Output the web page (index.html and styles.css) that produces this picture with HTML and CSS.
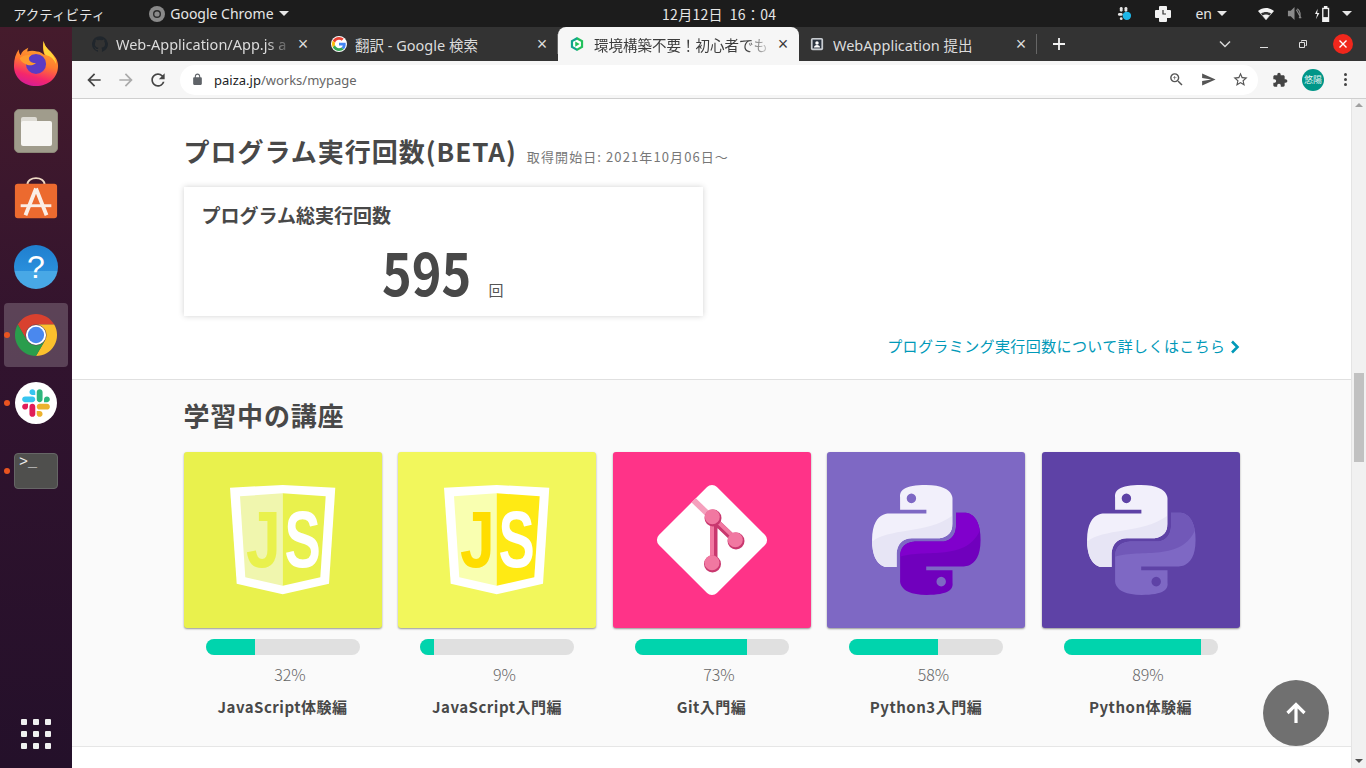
FILE: index.html
```html
<!DOCTYPE html>
<html lang="ja">
<head>
    <meta charset="UTF-8">
    <title>paiza - mypage</title>
    <link rel="stylesheet" href="styles.css">
</head>
<body>

    <!-- GNOME top bar -->
    <header class="topbar">
        <div class="topbar-left">
            <span class="activities">アクティビティ</span>
            <span class="app-menu">
                <svg class="app-icon" viewBox="0 0 16 16"><circle cx="8" cy="8" r="8" fill="#8a8a8a"/><circle cx="8" cy="8" r="4" fill="#2a2a2a"/><circle cx="8" cy="8" r="2.6" fill="#8a8a8a"/></svg>
                Google Chrome
                <i class="caret"></i>
            </span>
        </div>
        <div class="clock">12月12日&nbsp;&nbsp;16：04</div>
        <div class="tray">
            <svg class="tray-slack" viewBox="0 0 16 16"><circle cx="10.500" cy="10.500" r="4.500" fill="#1fb6e8"/><rect x="3" y="1" width="3" height="5" rx="1.500" fill="#e6e6e6"/><rect x="8" y="1" width="3" height="5" rx="1.500" fill="#e6e6e6"/><rect x="1" y="7.500" width="5" height="3" rx="1.500" fill="#e6e6e6"/><rect x="3" y="12" width="3" height="3" rx="1.500" fill="#e6e6e6"/></svg>
            <svg class="tray-cross" viewBox="0 0 16 16"><path d="M5 0h6a1 1 0 0 1 1 1v3h3a1 1 0 0 1 1 1v6a1 1 0 0 1-1 1h-3v3a1 1 0 0 1-1 1H5a1 1 0 0 1-1-1v-3H1a1 1 0 0 1-1-1V5a1 1 0 0 1 1-1h3V1a1 1 0 0 1 1-1z" fill="#f2f2f2"/><path d="M8 4v4h3" stroke="#333" stroke-width="1.200" fill="none"/></svg>
            <span class="tray-lang">en <i class="caret"></i></span>
            <svg class="tray-wifi" viewBox="0 0 16 14"><path d="M8 13L0 4c4.500-4 11.500-4 16 0z" fill="#f2f2f2"/><path d="M8 13L3 6.500c3-2 7-2 10 0z" fill="#333"/><path d="M8 13L4.500 8.500c2-1.300 5-1.300 7 0z" fill="#f2f2f2"/></svg>
            <svg class="tray-sound" viewBox="0 0 16 16"><path d="M1 5h3l4-4v14l-4-4H1z" fill="#8a8a8a"/><path d="M10 4l5 9M11 3c3 2 4 7 2 10" stroke="#8a8a8a" stroke-width="1.300" fill="none"/></svg>
            <svg class="tray-battery" viewBox="0 0 20 18"><path d="M4 3L1 9h2.500L2 15l4-7H3.500z" fill="#f2f2f2"/><path d="M11 0h4v2h2v16H9V2h2z" fill="#f2f2f2"/><rect x="10.500" y="3.500" width="5" height="9" fill="#222"/></svg>
            <i class="caret caret-last"></i>
        </div>
    </header>

    <div class="desktop">
        <!-- Ubuntu dock -->
        <nav class="dock">
            <div class="dock-item">
                <svg class="dock-icon" viewBox="0 0 48 48">
                    <defs>
                        <linearGradient id="foxBody" x1="0.700" y1="0" x2="0.400" y2="1"><stop offset="0" stop-color="#ffb52e"/><stop offset="0.500" stop-color="#ff7a2f"/><stop offset="0.800" stop-color="#f5276b"/><stop offset="1" stop-color="#d71d94"/></linearGradient>
                    </defs>
                    <path d="M32 1c1 5 3 7 7 11 5 5 8 9 8 15 0 12-10 21-23 21S1 39 1 27c0-7 2-13 5-17 0 3 1 5 2 6 1-4 4-6 8-8-1 2-1 3-1 4 3-1 7-1 10 0 3 0 6 2 8 4-2-5-2-11-1-15z" fill="url(#foxBody)"/>
                    <circle cx="24" cy="25" r="10.500" fill="#5b3bc4"/>
                    <path d="M7 19c3-3 8-4 12-3-2 1-3 3-2 5 1 2 4 3 7 3-3 3-8 3-11 1-3-1-5-3-6-6z" fill="#ff9a2e"/>
                    <path d="M32 1c1 5 3 7 7 11 4 5 6 9 6 13-2-5-6-8-10-9-3-1-4-9-3-15z" fill="#ffd43a"/>
                </svg>
            </div>
            <div class="dock-item">
                <div class="files-tile"><div class="files-tab"></div><div class="files-folder"></div></div>
            </div>
            <div class="dock-item">
                <svg class="dock-icon" viewBox="0 0 48 48">
                    <path d="M15 9c0-9 18-9 18 0" fill="none" stroke="#eed9c4" stroke-width="2"/>
                    <rect x="2" y="8" width="44" height="36" rx="3" fill="#ec6a2f"/>
                    <path d="M24 13L13 41M24 13l11 28" stroke="#fbeee6" stroke-width="4" fill="none"/>
                    <path d="M8 31h32" stroke="#fbeee6" stroke-width="3"/>
                </svg>
            </div>
            <div class="dock-item">
                <div class="help-icon">?</div>
            </div>
            <div class="dock-item dock-item-active">
                <i class="run-dot"></i>
                <svg class="dock-icon" viewBox="0 0 48 48">
                    <path d="M5 13A22 22 0 0 1 43 13H24A11 11 0 0 0 14.500 29.500Z" fill="#d9412f"/>
                    <path d="M43 13A22 22 0 0 1 24 46L33.500 29.500A11 11 0 0 0 24 13Z" fill="#fbc02d"/>
                    <path d="M24 46A22 22 0 0 1 5 13L14.500 29.500A11 11 0 0 0 33.500 29.500Z" fill="#2a9d4c"/>
                    <circle cx="24" cy="24" r="10.500" fill="#fff"/>
                    <circle cx="24" cy="24" r="8.500" fill="#4a88ee"/>
                </svg>
            </div>
            <div class="dock-item">
                <i class="run-dot"></i>
                <div class="slack-tile">
                    <svg class="slack-mark" viewBox="0 0 127 127">
                        <path d="M27.200 80c0 7.300-5.900 13.200-13.200 13.200C6.700 93.200.8 87.300.8 80c0-7.300 5.900-13.200 13.200-13.200h13.200V80zm6.600 0c0-7.300 5.900-13.200 13.200-13.200 7.300 0 13.200 5.900 13.200 13.200v33c0 7.300-5.900 13.200-13.200 13.200-7.300 0-13.200-5.900-13.200-13.200V80z" fill="#E01E5A"/>
                        <path d="M47 27c-7.300 0-13.200-5.900-13.200-13.200C33.800 6.500 39.700.6 47 .6c7.300 0 13.200 5.900 13.200 13.200V27H47zm0 6.700c7.300 0 13.200 5.900 13.200 13.200 0 7.300-5.900 13.200-13.200 13.200H13.900C6.600 60.100.7 54.200.7 46.900c0-7.300 5.900-13.200 13.200-13.200H47z" fill="#36C5F0"/>
                        <path d="M99.900 46.900c0-7.300 5.900-13.200 13.200-13.200 7.300 0 13.200 5.900 13.200 13.200 0 7.300-5.900 13.200-13.200 13.200H99.900V46.900zm-6.600 0c0 7.300-5.900 13.200-13.200 13.200-7.300 0-13.200-5.900-13.200-13.200V13.800C66.900 6.500 72.800.6 80.100.6c7.300 0 13.200 5.900 13.200 13.200v33.100z" fill="#2EB67D"/>
                        <path d="M80.100 99.800c7.300 0 13.200 5.900 13.200 13.200 0 7.300-5.900 13.200-13.200 13.200-7.300 0-13.200-5.900-13.200-13.200V99.800h13.200zm0-6.600c-7.300 0-13.200-5.900-13.200-13.200 0-7.300 5.900-13.200 13.200-13.200h33.100c7.300 0 13.200 5.900 13.200 13.200 0 7.300-5.900 13.200-13.200 13.200H80.100z" fill="#ECB22E"/>
                    </svg>
                </div>
            </div>
            <div class="dock-item">
                <i class="run-dot"></i>
                <div class="terminal-tile">&gt;_</div>
            </div>
            <div class="app-grid">
                <i></i><i></i><i></i><i></i><i></i><i></i><i></i><i></i><i></i>
            </div>
        </nav>

        <div class="browser">
            <!-- Tab strip -->
            <div class="tabstrip">
                <div class="tab">
                    <svg class="favicon" viewBox="0 0 24 24"><path fill="#20262c" d="M12 .3a12 12 0 0 0-3.800 23.380c.6.120.830-.260.830-.570L9 21.070c-3.340.720-4.040-1.610-4.040-1.610-.550-1.390-1.340-1.760-1.340-1.760-1.080-.740.090-.730.090-.730 1.200.090 1.840 1.240 1.840 1.240 1.070 1.830 2.810 1.300 3.500 1 .1-.780.420-1.310.760-1.610-2.670-.3-5.470-1.330-5.470-5.930 0-1.310.470-2.380 1.240-3.220-.140-.3-.540-1.520.1-3.180 0 0 1-.320 3.300 1.230a11.500 11.500 0 0 1 6 0c2.280-1.550 3.290-1.230 3.290-1.230.640 1.660.240 2.880.120 3.180a4.650 4.650 0 0 1 1.230 3.220c0 4.610-2.800 5.630-5.480 5.920.420.360.810 1.100.810 2.220l-.010 3.290c0 .310.2.690.820.57A12 12 0 0 0 12 .3"/></svg>
                    <span class="tab-title tab-title-fade">Web-Application/App.js a</span>
                    <span class="tab-close">×</span>
                </div>
                <div class="tab tab-split">
                    <span class="favicon-round">
                        <svg viewBox="0 0 48 48">
                            <path fill="#EA4335" d="M24 9.500c3.540 0 6.710 1.220 9.210 3.600l6.850-6.850C35.900 2.380 30.470 0 24 0 14.620 0 6.510 5.380 2.560 13.220l7.980 6.190C12.430 13.720 17.740 9.500 24 9.500z"/>
                            <path fill="#4285F4" d="M46.980 24.550c0-1.570-.150-3.090-.380-4.550H24v9.020h12.940c-.580 2.960-2.260 5.480-4.780 7.180l7.730 6c4.510-4.180 7.090-10.360 7.090-17.650z"/>
                            <path fill="#FBBC05" d="M10.530 28.590c-.480-1.450-.760-2.990-.760-4.590s.270-3.140.760-4.590l-7.980-6.190C.920 16.460 0 20.120 0 24c0 3.880.920 7.540 2.560 10.780l7.970-6.190z"/>
                            <path fill="#34A853" d="M24 48c6.480 0 11.930-2.130 16.030-5.810l-7.730-6c-2.150 1.450-4.920 2.300-8.300 2.300-6.260 0-11.570-4.220-13.470-9.910l-7.980 6.190C6.510 42.620 14.620 48 24 48z"/>
                        </svg>
                    </span>
                    <span class="tab-title">翻訳 - Google 検索</span>
                    <span class="tab-close">×</span>
                </div>
                <div class="tab tab-active">
                    <svg class="favicon favicon-small" viewBox="0 0 16 16"><path d="M8 0l7 4v8l-7 4z" fill="#22c05c"/><path d="M8 0L1 4v8l7 4z" fill="#10a58c"/><path d="M8 3l4.500 2.500v5L8 13l-4.500-2.500v-5z" fill="#fff"/><path d="M6 5v6l5-3z" fill="#22c05c"/></svg>
                    <span class="tab-title tab-title-fade">環境構築不要！初心者でも</span>
                    <span class="tab-close">×</span>
                </div>
                <div class="tab tab-last">
                    <svg class="favicon favicon-small" viewBox="0 0 16 16"><rect x="1" y="1" width="14" height="14" rx="2" fill="#c8ccd0"/><rect x="3" y="3" width="10" height="10" fill="#2b3440"/><circle cx="8" cy="6.800" r="2" fill="#fff"/><path d="M4.500 12c0-2 1.500-3 3.500-3s3.500 1 3.500 3z" fill="#fff"/></svg>
                    <span class="tab-title">WebApplication 提出</span>
                    <span class="tab-close">×</span>
                </div>
                <svg class="new-tab" viewBox="0 0 12 12"><path d="M6 0v12M0 6h12" stroke="#f2f2f2" stroke-width="1.800"/></svg>
                <div class="window-controls">
                    <svg class="win-chevron" viewBox="0 0 12 8"><path d="M1 1.500l5 5 5-5" fill="none" stroke="#d8d8d8" stroke-width="1.500"/></svg>
                    <span class="win-min"></span>
                    <svg class="win-restore" viewBox="0 0 8 8"><path d="M2.500 1.500V.5h5v5h-1M.5 2.500h5v5h-5z" fill="none" stroke="#e0e0e0"/></svg>
                    <span class="win-close"><svg viewBox="0 0 10 10"><path d="M1.500 1.500l7 7M8.500 1.500l-7 7" stroke="#fff" stroke-width="1.400"/></svg></span>
                </div>
            </div>

            <!-- Address bar -->
            <div class="toolbar">
                <svg class="tool-icon" viewBox="0 0 24 24"><path d="M20 11H7.830l5.590-5.590L12 4l-8 8 8 8 1.410-1.410L7.830 13H20v-2z" fill="#444"/></svg>
                <svg class="tool-icon" viewBox="0 0 24 24"><path d="M12 4l-1.410 1.410L16.170 11H4v2h12.170l-5.580 5.590L12 20l8-8z" fill="#aaa"/></svg>
                <svg class="tool-icon" viewBox="0 0 24 24"><path d="M17.650 6.350A7.958 7.958 0 0 0 12 4c-4.420 0-7.990 3.580-7.990 8s3.570 8 7.990 8c3.730 0 6.840-2.550 7.730-6h-2.080A5.990 5.990 0 0 1 12 18c-3.310 0-6-2.690-6-6s2.690-6 6-6c1.660 0 3.140.690 4.220 1.780L13 11h7V4l-2.350 2.350z" fill="#444"/></svg>
                <div class="omnibox">
                    <svg class="lock" viewBox="0 0 24 24"><path d="M18 8h-1V6c0-2.760-2.240-5-5-5S7 3.240 7 6v2H6c-1.100 0-2 .9-2 2v10c0 1.100.9 2 2 2h12c1.100 0 2-.9 2-2V10c0-1.100-.9-2-2-2zM9 6c0-1.660 1.340-3 3-3s3 1.340 3 3v2H9V6z" fill="#5f6368"/></svg>
                    <span class="url"><b>paiza.jp</b>/works/mypage</span>
                    <div class="omni-actions">
                        <svg class="omni-icon" viewBox="0 0 24 24"><path d="M15.500 14h-.790l-.280-.270A6.470 6.470 0 0 0 16 9.500 6.500 6.500 0 1 0 9.500 16c1.610 0 3.090-.590 4.230-1.570l.270.280v.790l5 4.990L20.490 19l-4.990-5zm-6 0C7.010 14 5 11.990 5 9.500S7.010 5 9.500 5 14 7.010 14 9.500 11.990 14 9.500 14zM12 10h-2v2H9v-2H7V9h2V7h1v2h2v1z" fill="#555"/></svg>
                        <svg class="omni-icon" viewBox="0 0 24 24"><path d="M3 20.500L22 12 3 3.500V10l13 2-13 2z" fill="#555"/></svg>
                        <svg class="omni-icon" viewBox="0 0 24 24"><path d="M22 9.240l-7.190-.620L12 2 9.190 8.630 2 9.240l5.460 4.730L5.820 21 12 17.270 18.180 21l-1.630-7.030L22 9.240zM12 15.400l-3.760 2.270 1-4.280-3.320-2.880 4.380-.380L12 6.100l1.710 4.040 4.380.380-3.320 2.880 1 4.280L12 15.400z" fill="#555"/></svg>
                    </div>
                </div>
                <svg class="ext-icon" viewBox="0 0 24 24"><path d="M20.500 11H19V7c0-1.100-.9-2-2-2h-4V3.500C13 2.120 11.880 1 10.500 1S8 2.120 8 3.500V5H4c-1.100 0-1.990.9-1.990 2v3.800H3.500c1.490 0 2.700 1.210 2.700 2.700s-1.210 2.700-2.700 2.700H2V20c0 1.100.9 2 2 2h3.800v-1.500c0-1.490 1.210-2.700 2.700-2.700 1.490 0 2.700 1.210 2.700 2.700V22H17c1.100 0 2-.9 2-2v-4h1.500c1.380 0 2.500-1.120 2.500-2.500S21.880 11 20.500 11z" fill="#444"/></svg>
                <span class="avatar">悠陽</span>
                <span class="kebab"><i></i><i></i><i></i></span>
            </div>

            <!-- Page area -->
            <div class="viewport">
                <main class="page">
                    <section class="run-section">
                        <div class="container">
                            <div class="run-heading">
                                <h2 class="section-title">プログラム実行回数(BETA)</h2>
                                <span class="since">取得開始日: 2021年10月06日〜</span>
                            </div>
                            <div class="run-card">
                                <h3 class="run-card-title">プログラム総実行回数</h3>
                                <p class="run-count"><span class="run-num">595</span><span class="run-unit">回</span></p>
                            </div>
                            <p class="more-line">
                                <a class="more-link" href="#">プログラミング実行回数について詳しくはこちら<svg class="more-chevron" viewBox="0 0 10 14"><path d="M2 1.500L7.500 7 2 12.500" fill="none" stroke="#0099b8" stroke-width="2.600"/></svg></a>
                            </p>
                        </div>
                    </section>

                    <section class="course-section">
                        <div class="container">
                            <h2 class="section-title course-title">学習中の講座</h2>
                            <div class="course-grid">
                                <article class="course">
                                    <div class="thumb thumb-js1">
                                        <svg class="thumb-art" viewBox="0 0 198 176">
                                            <path d="M46 35.700L98.700 33l52.600 2.700-6.300 96-46.300 10.600-46-10.600z" fill="#fff"/>
                                            <path d="M56 44.300l42.700-3v92.400l-37.400-8.400z" fill="#f0f6ae"/>
                                            <path d="M98.700 41.300l43 3-5.400 81-37.600 8.400z" fill="#e9f14d"/>
                                            <text class="js-letter" transform="translate(62 115) scale(.78 1)" fill="#e9f14d">J</text>
                                            <text class="js-letter" transform="translate(100.500 115) scale(.68 1)" fill="#fff">S</text>
                                        </svg>
                                    </div>
                                    <div class="bar"><div class="bar-fill" style="width:32%"></div></div>
                                    <div class="percent">32%</div>
                                    <h4 class="course-name">JavaScript体験編</h4>
                                </article>

                                <article class="course">
                                    <div class="thumb thumb-js2">
                                        <svg class="thumb-art" viewBox="0 0 198 176">
                                            <path d="M46 35.700L98.700 33l52.600 2.700-6.300 96-46.300 10.600-46-10.600z" fill="#fff"/>
                                            <path d="M56 44.300l42.700-3v92.400l-37.400-8.400z" fill="#f9ffb0"/>
                                            <path d="M98.700 41.300l43 3-5.400 81-37.600 8.400z" fill="#ffea14"/>
                                            <text class="js-letter" transform="translate(62 115) scale(.78 1)" fill="#ffdd00">J</text>
                                            <text class="js-letter" transform="translate(100.500 115) scale(.68 1)" fill="#fff">S</text>
                                        </svg>
                                    </div>
                                    <div class="bar"><div class="bar-fill" style="width:9%"></div></div>
                                    <div class="percent">9%</div>
                                    <h4 class="course-name">JavaScript入門編</h4>
                                </article>

                                <article class="course">
                                    <div class="thumb thumb-git">
                                        <svg class="thumb-art" viewBox="0 0 198 176">
                                            <defs>
                                                <clipPath id="gitDiamond"><rect x="58" y="47" width="82" height="82" rx="7" transform="rotate(45 99 88)"/></clipPath>
                                            </defs>
                                            <rect x="58" y="47" width="82" height="82" rx="7" transform="rotate(45 99 88)" fill="#fff"/>
                                            <path d="M72 40L99 66" stroke="#f5a0bd" stroke-width="6" clip-path="url(#gitDiamond)"/>
                                            <path d="M101 66v45M101 68l22 21" stroke="#c9386f" stroke-width="7" fill="none"/>
                                            <path d="M99 66v45M100 65l22 21" stroke="#f178a1" stroke-width="4" fill="none"/>
                                            <circle cx="100" cy="66" r="8.500" fill="#c9386f"/><circle cx="99.300" cy="64.800" r="7.500" fill="#f178a1"/>
                                            <circle cx="123" cy="89" r="8.500" fill="#c9386f"/><circle cx="122.300" cy="87.800" r="7.500" fill="#f178a1"/>
                                            <circle cx="99.500" cy="112" r="8.500" fill="#c9386f"/><circle cx="99" cy="110.800" r="7.500" fill="#f178a1"/>
                                        </svg>
                                    </div>
                                    <div class="bar"><div class="bar-fill" style="width:73%"></div></div>
                                    <div class="percent">73%</div>
                                    <h4 class="course-name">Git入門編</h4>
                                </article>

                                <article class="course">
                                    <div class="thumb thumb-py3">
                                        <svg class="thumb-art" viewBox="0 0 198 176">
                                            <defs>
                                                <path id="pySnakeTop" transform="translate(45.300 33) scale(4.500 4.580)" d="M14.250.18l.9.2.730.260.590.3.450.320.340.340.250.340.160.330.1.3.040.260.020.2-.010.130V8.500l-.050.630-.130.550-.210.460-.260.380-.3.310-.330.250-.350.190-.350.140-.330.1-.3.070-.260.040-.210.020H8.770l-.690.050-.590.140-.5.220-.410.270-.330.320-.270.350-.2.360-.150.370-.1.350-.070.320-.040.270-.020.210v3.060H3.170l-.210-.030-.280-.070-.320-.120-.350-.180-.360-.260-.360-.360-.350-.460-.320-.590-.280-.730-.210-.880-.140-1.050-.050-1.230.060-1.220.160-1.040.240-.870.320-.710.360-.570.4-.44.420-.33.420-.24.4-.16.360-.1.320-.050.240-.010h.160l.060.010h8.160v-.83H6.180l-.010-2.750-.020-.37.050-.34.110-.31.170-.28.250-.26.310-.23.38-.2.44-.18.51-.15.58-.12.64-.1.71-.06.77-.04.84-.02 1.270.05zm-6.300 1.980l-.230.330-.080.410.080.410.230.340.330.220.410.090.410-.09.330-.22.230-.34.080-.41-.08-.41-.23-.33-.33-.22-.41-.09-.41.09z"/>
                                                <path id="pySnakeBottom" transform="translate(45.300 33) scale(4.500 4.580)" d="M21.040 6.110l.280.060.320.120.350.180.360.270.360.350.350.470.320.590.280.730.210.880.140 1.040.050 1.230-.060 1.230-.160 1.040-.240.860-.320.710-.360.570-.4.450-.42.330-.42.240-.4.160-.360.090-.32.050-.24.020-.16-.01h-8.220v.820h5.840l.010 2.760.020.360-.05.340-.11.310-.17.290-.25.250-.31.240-.38.2-.44.170-.51.150-.58.130-.64.090-.71.070-.77.040-.84.010-1.270-.04-1.070-.14-.9-.2-.73-.25-.59-.3-.45-.33-.34-.34-.25-.34-.16-.33-.1-.3-.04-.25-.02-.2.010-.13v-5.340l.05-.64.13-.54.21-.46.26-.38.3-.32.33-.24.35-.2.35-.14.33-.1.3-.06.26-.04.21-.02.13-.01h5.840l.690-.05.590-.14.5-.21.410-.28.330-.32.270-.35.2-.36.150-.36.1-.35.070-.32.040-.28.020-.21V6.070h2.090l.140.010zm-6.470 14.250l-.230.330-.080.410.080.410.230.330.330.230.410.080.410-.08.330-.23.230-.33.080-.41-.08-.41-.23-.33-.33-.23-.41-.08-.41.08z"/>
                                                <clipPath id="pyClipTop"><use href="#pySnakeTop"/></clipPath>
                                                <clipPath id="pyClipBottom"><use href="#pySnakeBottom"/></clipPath>
                                            </defs>
                                            <use href="#pySnakeTop" fill="#f2f0fb"/>
                                            <path d="M45 90C60 76 100 82 125 64V130H45Z" fill="#e7e5f5" clip-path="url(#pyClipTop)"/>
                                            <use href="#pySnakeBottom" fill="#7000bd"/>
                                            <path d="M70 106C95 95 140 112 154 76V40H70Z" fill="#8000cc" clip-path="url(#pyClipBottom)"/>
                                        </svg>
                                    </div>
                                    <div class="bar"><div class="bar-fill" style="width:58%"></div></div>
                                    <div class="percent">58%</div>
                                    <h4 class="course-name">Python3入門編</h4>
                                </article>

                                <article class="course">
                                    <div class="thumb thumb-py">
                                        <svg class="thumb-art" viewBox="0 0 198 176">
                                            <use href="#pySnakeTop" fill="#f2f0fb"/>
                                            <path d="M45 90C60 76 100 82 125 64V130H45Z" fill="#e7e5f5" clip-path="url(#pyClipTop)"/>
                                            <use href="#pySnakeBottom" fill="#7e68c4"/>
                                            <path d="M70 106C95 95 140 112 154 76V40H70Z" fill="#7158b8" clip-path="url(#pyClipBottom)"/>
                                        </svg>
                                    </div>
                                    <div class="bar"><div class="bar-fill" style="width:89%"></div></div>
                                    <div class="percent">89%</div>
                                    <h4 class="course-name">Python体験編</h4>
                                </article>
                            </div>
                        </div>
                    </section>
                </main>

                <!-- Scrollbar -->
                <div class="scrollbar">
                    <i class="scroll-up"></i>
                    <div class="scroll-thumb"></div>
                    <i class="scroll-down"></i>
                </div>

                <!-- Back to top floats over the page -->
                <a class="to-top" href="#">
                    <svg viewBox="0 0 24 24"><path d="M12 22V4M3.500 12L12 3.500 20.500 12" fill="none" stroke="#fff" stroke-width="3.200"/></svg>
                </a>
            </div>
        </div>
    </div>

</body>
</html>
```

FILE: styles.css
```css
* {
    box-sizing: border-box;
}

html, body {
    margin: 0;
    width: 1366px;
    height: 768px;
    overflow: hidden;
}

body {
    font-family: "Noto Sans CJK JP", "Noto Sans", sans-serif;
    background-color: #fff;
    color: #484848;
}

h2, h3, h4, p {
    margin: 0;
}

/* Top bar */
.topbar {
    height: 27px;
    background-color: #1c1c1c;
    color: #e6e6e6;
    display: grid;
    grid-template-columns: 662px auto 1fr;
    align-items: center;
    font-size: 14px;
}

.topbar-left {
    display: flex;
    align-items: center;
}

.activities {
    margin-left: 13px;
    font-size: 13.500px;
}

.app-menu {
    margin-left: 44px;
    display: flex;
    align-items: center;
    font-family: "Noto Sans", sans-serif;
    font-size: 14px;
}

.app-icon {
    width: 16px;
    height: 16px;
    margin-right: 5px;
}

.caret {
    display: inline-block;
    width: 0;
    height: 0;
    border-left: 5px solid transparent;
    border-right: 5px solid transparent;
    border-top: 5px solid #e6e6e6;
    margin-left: 5px;
}

.clock {
    font-size: 14px;
    letter-spacing: 0.300px;
}

.tray {
    display: flex;
    align-items: center;
    justify-content: flex-end;
    font-family: "Noto Sans", sans-serif;
}

.tray-slack {
    width: 15px;
    height: 15px;
    margin-right: 23px;
}

.tray-cross {
    width: 16px;
    height: 16px;
    margin-right: 24px;
}

.tray-lang {
    margin-right: 31px;
    font-size: 14px;
    display: flex;
    align-items: center;
}

.tray-wifi {
    width: 16px;
    height: 14px;
    margin-right: 13px;
}

.tray-sound {
    width: 15px;
    height: 15px;
    margin-right: 12px;
}

.tray-battery {
    width: 18px;
    height: 16px;
}

.caret-last {
    margin-left: 10px;
    margin-right: 14px;
}

/* Layout below the top bar */
.desktop {
    display: flex;
    height: 741px;
}

/* Dock */
.dock {
    width: 72px;
    flex: none;
    padding-top: 2px;
    display: flex;
    flex-direction: column;
    background: linear-gradient(180deg, #451b2c 0%, #31132e 45%, #24102a 100%);
}

.dock-item {
    position: relative;
    height: 68px;
    margin: 0 4px;
    display: flex;
    align-items: center;
    justify-content: center;
    flex: none;
}

.dock-item-active {
    background-color: rgba(255, 255, 255, 0.2);
    border-radius: 4px;
    height: 64px;
    margin-top: 2px;
    margin-bottom: 2px;
}

.dock-icon {
    width: 46px;
    height: 46px;
}

.run-dot {
    position: absolute;
    left: 0;
    top: 50%;
    width: 6px;
    height: 6px;
    margin-top: -3px;
    border-radius: 50%;
    background-color: #e95420;
}

.files-tile {
    position: relative;
    width: 44px;
    height: 44px;
    border-radius: 5px;
    background-color: #a09c8c;
    border: 1px solid #8c8878;
}

.files-tab {
    position: absolute;
    left: 6px;
    top: 7px;
    width: 16px;
    height: 8px;
    background-color: #dedcd5;
    border-radius: 2px 2px 0 0;
}

.files-folder {
    position: absolute;
    left: 6px;
    top: 11px;
    width: 31px;
    height: 25px;
    background-color: #f7f6f3;
    border-radius: 2px;
}

.help-icon {
    width: 44px;
    height: 44px;
    border-radius: 50%;
    background: linear-gradient(180deg, #1f7fcf 0%, #2a8fdc 60%, #48a8e6 60%, #48a8e6 100%);
    color: #fff;
    font-family: "Liberation Sans", sans-serif;
    font-size: 32px;
    line-height: 44px;
    text-align: center;
}

.slack-tile {
    width: 42px;
    height: 42px;
    border-radius: 50%;
    background-color: #fff;
    display: flex;
    align-items: center;
    justify-content: center;
}

.slack-mark {
    width: 28px;
    height: 28px;
}

.terminal-tile {
    width: 44px;
    height: 36px;
    background-color: #4f4f4d;
    border: 1px solid #666;
    border-radius: 4px;
    color: #eee;
    font-family: "Liberation Mono", monospace;
    font-size: 15px;
    line-height: 18px;
    padding-left: 4px;
}

.app-grid {
    margin-top: auto;
    margin-bottom: 19px;
    margin-left: 21px;
    width: 30px;
    display: grid;
    grid-template-columns: repeat(3, 6px);
    gap: 6px;
}

.app-grid i {
    height: 6px;
    border-radius: 1px;
    background-color: #f0f0f0;
}

/* Browser */
.browser {
    flex: 1;
    display: flex;
    flex-direction: column;
    min-width: 0;
}

.tabstrip {
    height: 34px;
    flex: none;
    background-color: #333;
    padding-left: 8px;
    display: flex;
    align-items: stretch;
    color: #dcdcdc;
}

.tab {
    width: 239px;
    flex: none;
    display: flex;
    align-items: center;
    padding: 0 9px 0 12px;
    font-family: "Noto Sans", "Noto Sans CJK JP", sans-serif;
    font-size: 14.500px;
    position: relative;
}

.tab-split::after,
.tab-last::after {
    content: "";
    position: absolute;
    right: 0;
    top: 7px;
    height: 20px;
    width: 1px;
    background-color: #666;
}

.tab-active {
    width: 241px;
    background-color: #f6f6f6;
    color: #3c3c3c;
    border-radius: 8px 8px 0 0;
}

.tab-last {
    width: 238px;
    padding-left: 11px;
}

.favicon {
    width: 16px;
    height: 16px;
    flex: none;
}

.favicon-small {
    width: 14px;
    height: 14px;
    margin-right: 2px;
}

.favicon-round {
    width: 16px;
    height: 16px;
    flex: none;
    padding: 1px;
    border-radius: 50%;
    background-color: #fff;
    display: flex;
}

.tab-title {
    flex: 1;
    min-width: 0;
    margin-left: 8px;
    white-space: nowrap;
    overflow: hidden;
}

.tab-last .tab-title {
    margin-left: 7px;
}

.tab-title-fade {
    -webkit-mask-image: linear-gradient(90deg, #000 85%, transparent 100%);
    mask-image: linear-gradient(90deg, #000 85%, transparent 100%);
}

.tab-close {
    width: 14px;
    flex: none;
    margin-left: 3px;
    text-align: center;
    font-family: "Liberation Sans", sans-serif;
    font-size: 18px;
    line-height: 18px;
}

.new-tab {
    width: 12px;
    height: 12px;
    margin: 11px 0 0 16px;
}

.window-controls {
    flex: 1;
    display: flex;
    align-items: center;
    justify-content: flex-end;
}

.win-chevron {
    width: 12px;
    height: 8px;
    margin-right: 29px;
}

.win-min {
    width: 8px;
    height: 1px;
    margin: 6px 31px 0 0;
    background-color: #e0e0e0;
}

.win-restore {
    width: 8px;
    height: 8px;
    margin-right: 26px;
}

.win-close {
    width: 20px;
    height: 20px;
    border-radius: 50%;
    background-color: #f0271c;
    margin-right: 13px;
    display: flex;
    align-items: center;
    justify-content: center;
}

.win-close svg {
    width: 10px;
    height: 10px;
}

/* Toolbar */
.toolbar {
    height: 38px;
    flex: none;
    background-color: #f6f6f6;
    border-bottom: 1px solid #cfcfcf;
    display: flex;
    align-items: center;
    padding-left: 12px;
}

.tool-icon {
    width: 20px;
    height: 20px;
    margin-right: 12px;
}

.omnibox {
    width: 1078px;
    height: 30px;
    border-radius: 15px;
    background-color: #fff;
    display: flex;
    align-items: center;
    padding-left: 11px;
}

.lock {
    width: 13px;
    height: 13px;
}

.url {
    margin-left: 10px;
    font-family: "Noto Sans", sans-serif;
    font-size: 13px;
    color: #666;
}

.url b {
    font-weight: 400;
    color: #202124;
}

.omni-actions {
    margin-left: auto;
    display: flex;
    align-items: center;
    gap: 15px;
    padding-right: 9px;
}

.omni-icon {
    width: 17px;
    height: 17px;
}

.ext-icon {
    width: 16px;
    height: 16px;
    margin-left: 14px;
}

.avatar {
    width: 22px;
    height: 22px;
    margin-left: 14px;
    border-radius: 50%;
    background-color: #009688;
    color: #e6f5f3;
    font-size: 9px;
    line-height: 22px;
    text-align: center;
}

.kebab {
    margin-left: 20px;
    display: flex;
    flex-direction: column;
    gap: 2px;
}

.kebab i {
    width: 3px;
    height: 3px;
    border-radius: 50%;
    background-color: #444;
}

/* Page */
.viewport {
    position: relative;
    flex: 1;
    display: flex;
    overflow: hidden;
    min-height: 0;
}

.page {
    width: 1279px;
    flex: none;
    background-color: #fff;
}

.container {
    width: 1056px;
    margin: 0 auto;
}

.section-title {
    font-size: 26px;
    font-weight: 700;
    letter-spacing: 1px;
    line-height: 36px;
    color: #484848;
}

.run-section {
    height: 281px;
    padding-top: 34px;
    border-bottom: 1px solid #e0e0e0;
}

.run-heading {
    display: flex;
    align-items: baseline;
}

.since {
    margin-left: 10px;
    font-size: 13px;
    letter-spacing: 1.100px;
    color: #777;
}

.run-card {
    width: 519px;
    height: 129px;
    margin-top: 18px;
    padding: 14px 18px;
    background-color: #fff;
    box-shadow: 0 0 6px rgba(0, 0, 0, 0.18);
}

.run-card-title {
    font-size: 19px;
    line-height: 28px;
    font-weight: 700;
    color: #484848;
}

.run-count {
    display: flex;
    align-items: baseline;
    justify-content: center;
    margin-top: 10px;
}

.run-num {
    display: inline-block;
    width: 87px;
    white-space: nowrap;
    font-size: 58px;
    line-height: 64px;
    font-weight: 700;
    transform: scaleX(0.87);
    transform-origin: left center;
}

.run-unit {
    margin-left: 19px;
    font-size: 15px;
    line-height: 16px;
    color: #555;
}

.more-line {
    margin-top: 17px;
    text-align: right;
}

.more-link {
    font-size: 15px;
    line-height: 22px;
    letter-spacing: 0.400px;
    color: #0099b8;
    text-decoration: none;
}

.more-chevron {
    width: 10px;
    height: 14px;
    margin-left: 4px;
    vertical-align: -2px;
}

.course-section {
    height: 367px;
    padding-top: 17px;
    background-color: #fafafa;
    border-bottom: 1px solid #e6e6e6;
}

.course-title {
    letter-spacing: 0.800px;
}

.course-grid {
    display: grid;
    grid-template-columns: repeat(5, 198px);
    justify-content: space-between;
    margin-top: 19px;
}

.course {
    display: flex;
    flex-direction: column;
    align-items: center;
}

.thumb {
    width: 198px;
    height: 176px;
    border-radius: 3px;
    box-shadow: 0 1px 2px rgba(0, 0, 0, 0.4);
}

.thumb-art {
    display: block;
    width: 198px;
    height: 176px;
}

.thumb-js1 {
    background-color: #e9f14d;
}

.thumb-js2 {
    background-color: #f2f75c;
}

.thumb-git {
    background-color: #ff3388;
}

.thumb-py3 {
    background-color: #7e68c4;
}

.thumb-py {
    background-color: #5e42a6;
}

.js-letter {
    font-family: "Liberation Sans", sans-serif;
    font-size: 80px;
    font-weight: 700;
}

.bar {
    width: 154px;
    height: 16px;
    margin-top: 11px;
    border-radius: 8px;
    background-color: #e0e0e0;
    overflow: hidden;
}

.bar-fill {
    height: 100%;
    background-color: #00d4ad;
}

.percent {
    margin-top: 8px;
    padding-left: 15px;
    font-size: 16px;
    line-height: 22px;
    font-weight: 300;
    color: #666;
}

.course-name {
    margin-top: 11px;
    font-size: 15px;
    line-height: 22px;
    font-weight: 700;
    letter-spacing: 0.500px;
    color: #484848;
}

/* Scrollbar */
.scrollbar {
    position: relative;
    flex: 1;
    background-color: #f1f1f1;
    border-left: 1px solid #e4e4e4;
}

.scroll-thumb {
    position: absolute;
    left: 2px;
    right: 2px;
    top: 274px;
    height: 89px;
    background-color: #c1c1c1;
}

.scroll-up,
.scroll-down {
    position: absolute;
    left: 3px;
    width: 0;
    height: 0;
    border-left: 4px solid transparent;
    border-right: 4px solid transparent;
}

.scroll-up {
    top: 4px;
    border-bottom: 4px solid #a0a0a0;
}

.scroll-down {
    bottom: 5px;
    border-top: 4px solid #505050;
}

/* Back to top */
.to-top {
    position: absolute;
    left: 1191px;
    top: 581px;
    width: 66px;
    height: 66px;
    border-radius: 50%;
    background-color: #707070;
    display: flex;
    align-items: center;
    justify-content: center;
}

.to-top svg {
    width: 24px;
    height: 24px;
}
```
